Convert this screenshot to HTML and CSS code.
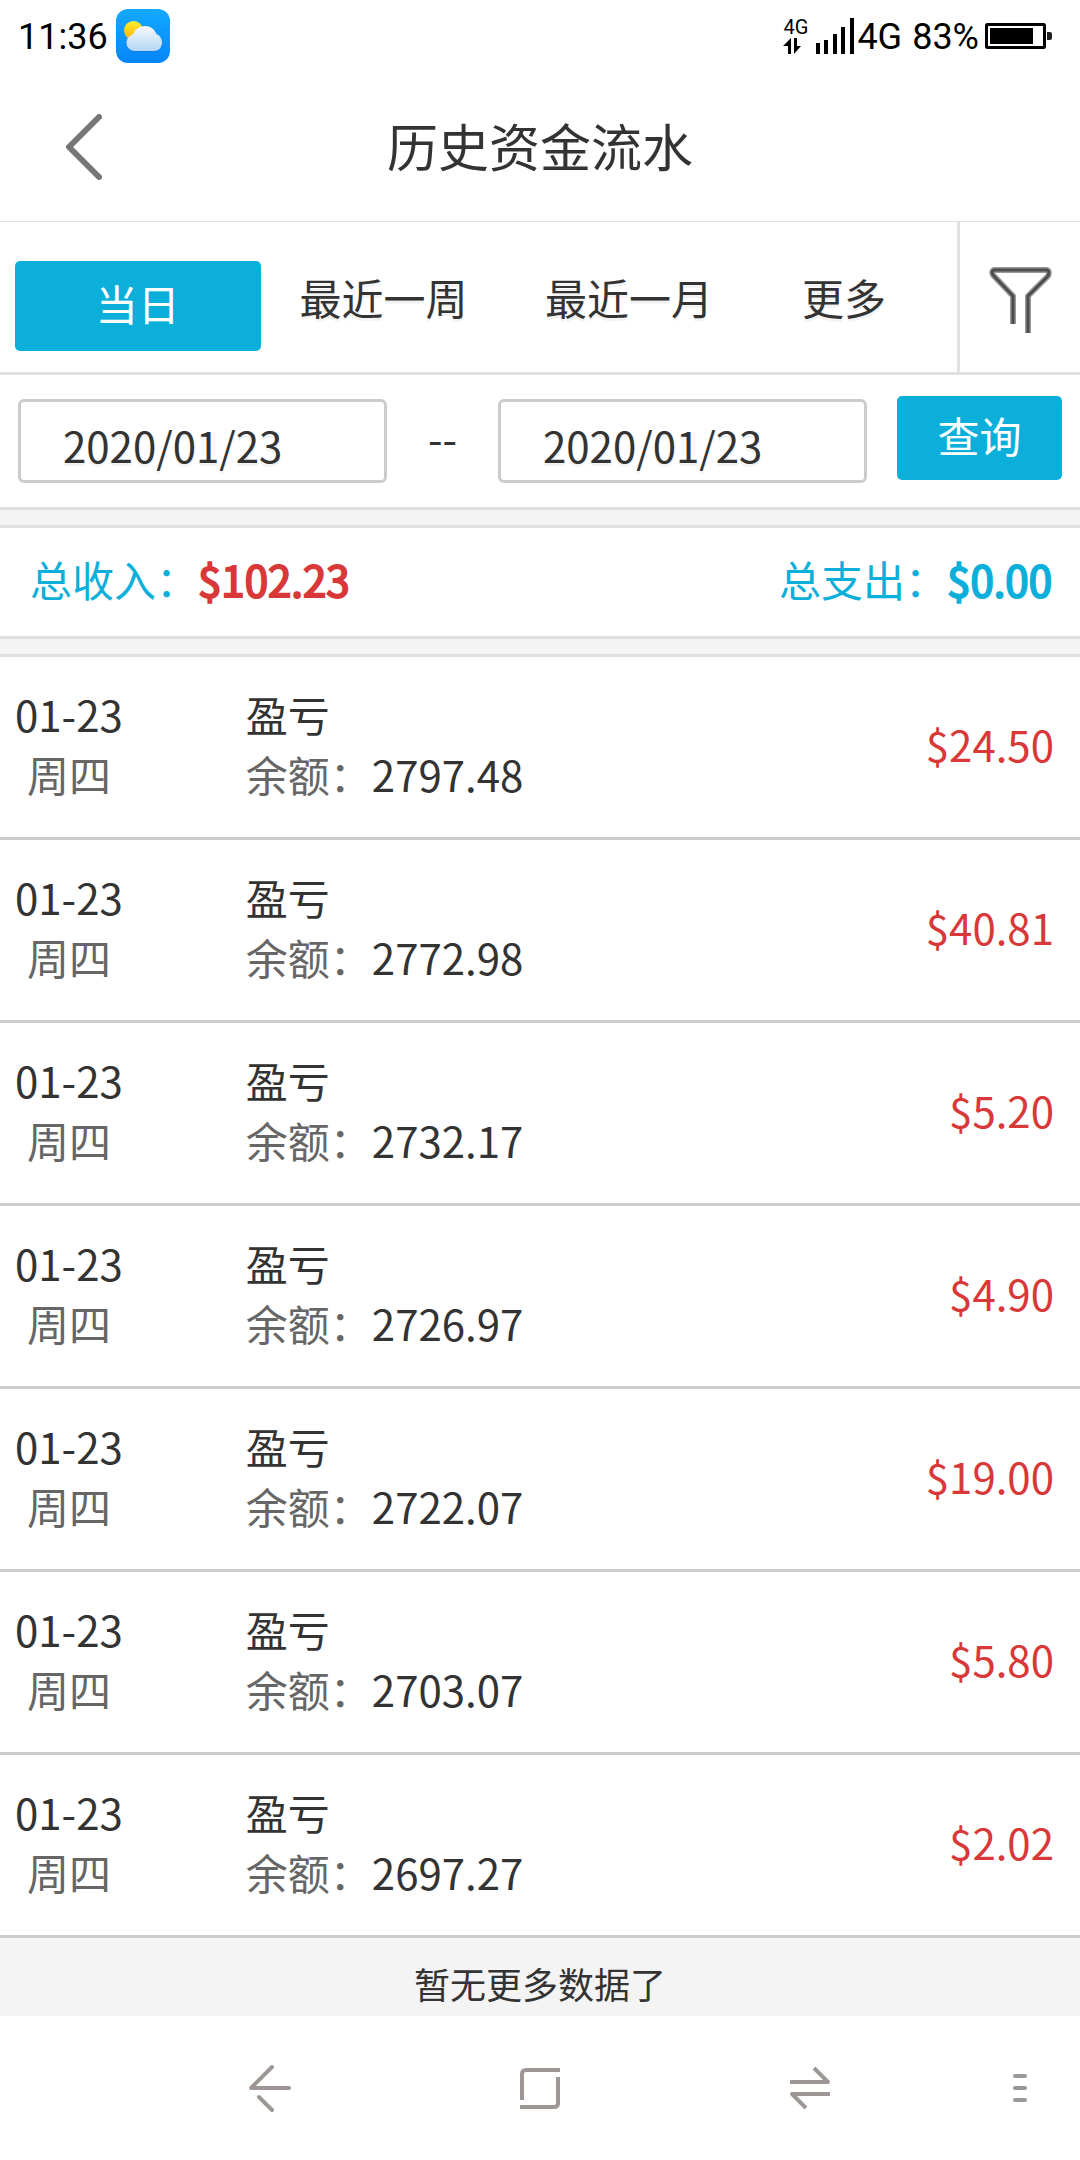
FILE: index.html
```html
<!DOCTYPE html>
<html lang="zh-CN">
<head>
<meta charset="utf-8">
<meta name="viewport" content="width=device-width">
<title>历史资金流水</title>
<link rel="stylesheet" href="styles.css">
</head>
<body>
<div class="status">
  <span class="status-text">11:36</span>
  <svg class="weather" viewBox="0 0 54 54" width="54" height="54" aria-hidden="true">
    <defs>
      <linearGradient id="sky" x1="0" y1="0" x2="0" y2="1"><stop offset="0" stop-color="#14a9ff"/><stop offset="1" stop-color="#0586fa"/></linearGradient>
      <linearGradient id="sun" x1="0" y1="0" x2="0" y2="1"><stop offset="0" stop-color="#fff032"/><stop offset="1" stop-color="#ffae00"/></linearGradient>
      <linearGradient id="cloud" x1="0" y1="0" x2="0" y2="1"><stop offset="0" stop-color="#f6fafe"/><stop offset="1" stop-color="#b5d6f5"/></linearGradient>
    </defs>
    <rect width="54" height="54" rx="12" fill="url(#sky)"/>
    <circle cx="17.500" cy="21.500" r="9.500" fill="url(#sun)"/>
    <path d="M18 43.500a8 8 0 0 1-7.500-8c0-4 2.500-7.500 6.500-8.500 1.500-6 6.500-10 12.500-10 5.500 0 9.500 3 11.500 8.500 3 1.500 5 4.500 5 8.500 0 5-3.500 9.500-8 9.500z" fill="#086fd8" opacity=".35"/>
    <path d="M18 42a8 8 0 0 1-7.500-8c0-4 2.500-7.500 6.500-8.500 1.500-5 6.500-8.500 12-8.500s9.500 3 11.500 8c3.500 1.500 5.500 5 5.500 8.500 0 5-3.500 8.500-8 8.500z" fill="url(#cloud)"/>
  </svg>
  <div class="status-right">
    <div class="data">
      <span class="data-text">4G</span>
      <svg viewBox="0 0 18 18" width="18" height="18" aria-hidden="true"><path d="M8 1v16H5V9H0zM11 1v16l7-8h-4V1z"/></svg>
    </div>
    <svg class="signal" viewBox="0 0 40 36" width="40" height="36" aria-hidden="true"><path d="M1 25h4v11H1zM9 22h4v14H9zM18 16h4v20h-4zM26 9h4v27h-4zM35 0h4v36h-4z"/></svg>
    <span class="status-text">4G</span>
    <span class="status-text percent">83%</span>
    <svg viewBox="0 0 67 28" width="67" height="28" aria-hidden="true"><rect x="1.500" y="2.500" width="58" height="23" rx="1" fill="none" stroke="#000" stroke-width="3"/><path d="M5 6h43v16H5z"/><path d="M62 10h3q2 0 2 2v4q0 2-2 2h-3z" fill="#222"/></svg>
  </div>
</div>

<header class="header">
  <button class="back" type="button" aria-label="返回"><svg viewBox="0 0 36 66" width="36" height="66"><path d="M33 3 3 33l30 30" fill="none" stroke="#767675" stroke-width="6" stroke-linecap="round" stroke-linejoin="round"/></svg></button>
  <h1 class="title">历史资金流水</h1>
</header>

<main class="main">
  <div class="filters">
    <nav class="tabs">
      <a class="tab tab-active" href="#today">当日</a>
      <a class="tab" href="#week">最近一周</a>
      <a class="tab" href="#month">最近一月</a>
      <a class="tab" href="#more">更多</a>
    </nav>
    <button class="filter" type="button" aria-label="筛选">
      <svg viewBox="0 0 64 66" width="64" height="66" fill="none" stroke-linejoin="round">
        <path d="M24 57V29L4 8q-2-4 1-5h53q3 1 1 6L39 29v37" stroke="#999" stroke-width="6"/>
        <path d="M24 57V29L4 8q-2-4 1-5h53q3 1 1 6L39 29v37" stroke="#4d4d4d" stroke-width="3"/>
      </svg>
    </button>
  </div>

  <form class="range">
    <input class="date" type="text" value="2020/01/23" aria-label="开始日期">
    <span class="to">--</span>
    <input class="date" type="text" value="2020/01/23" aria-label="结束日期">
    <button class="query" type="button">查询</button>
  </form>

  <div class="summary">
    <div>总收入：<strong class="total income">$102.23</strong></div>
    <div>总支出：<strong class="total">$0.00</strong></div>
  </div>

  <ul class="list">
    <li class="row"><div class="day"><span>01-23</span><span class="muted">周四</span></div><div class="info"><span>盈亏</span><span><span class="muted">余额：</span>2797.48</span></div><span class="amount">$24.50</span></li>
    <li class="row"><div class="day"><span>01-23</span><span class="muted">周四</span></div><div class="info"><span>盈亏</span><span><span class="muted">余额：</span>2772.98</span></div><span class="amount">$40.81</span></li>
    <li class="row"><div class="day"><span>01-23</span><span class="muted">周四</span></div><div class="info"><span>盈亏</span><span><span class="muted">余额：</span>2732.17</span></div><span class="amount">$5.20</span></li>
    <li class="row"><div class="day"><span>01-23</span><span class="muted">周四</span></div><div class="info"><span>盈亏</span><span><span class="muted">余额：</span>2726.97</span></div><span class="amount">$4.90</span></li>
    <li class="row"><div class="day"><span>01-23</span><span class="muted">周四</span></div><div class="info"><span>盈亏</span><span><span class="muted">余额：</span>2722.07</span></div><span class="amount">$19.00</span></li>
    <li class="row"><div class="day"><span>01-23</span><span class="muted">周四</span></div><div class="info"><span>盈亏</span><span><span class="muted">余额：</span>2703.07</span></div><span class="amount">$5.80</span></li>
    <li class="row"><div class="day"><span>01-23</span><span class="muted">周四</span></div><div class="info"><span>盈亏</span><span><span class="muted">余额：</span>2697.27</span></div><span class="amount">$2.02</span></li>
  </ul>
  <p class="end">暂无更多数据了</p>
</main>

<nav class="system">
  <button class="key key-back" type="button" aria-label="后退"><svg viewBox="0 0 48 48" width="48" height="48"><path d="M43 24H5L26 3M13 33l13 13" stroke-linecap="round" stroke-linejoin="round"/></svg></button>
  <button class="key" type="button" aria-label="主页"><svg viewBox="0 0 48 48" width="48" height="48"><path d="M44 6H10q-4 0-4 4v26M42 13v26q0 4-4 4H4"/></svg></button>
  <button class="key" type="button" aria-label="切换"><svg viewBox="0 0 48 48" width="48" height="48"><path d="M4 18h38L28 4M44 30H6l14 14" stroke-linejoin="round"/></svg></button>
  <button class="key key-menu" type="button" aria-label="菜单"><svg viewBox="0 0 48 48" width="48" height="48"><path d="M19 12h10M19 24h10M19 36h10" stroke-linecap="round"/></svg></button>
</nav>
</body>
</html>
```
FILE: styles.css
```css
* {
  box-sizing: border-box;
}

body {
  margin: 0;
  min-height: 100vh;
  display: flex;
  flex-direction: column;
  background: #fff;
  color: #333;
  font: 42px/60px "Noto Sans CJK SC", sans-serif;
}

button {
  margin: 0;
  padding: 0;
  border: 0;
  background: none;
  font: inherit;
  color: inherit;
}

svg {
  display: block;
}

/* Phone status bar */
.status {
  display: flex;
  align-items: center;
  height: 72px;
  padding: 0 28px 0 18px;
  color: #000;
  font-family: Roboto, sans-serif;
}

.status-text {
  padding-top: 2px;
  font-size: 36px;
  line-height: 44px;
}

.weather {
  margin-left: 8px;
}

.status-right {
  display: flex;
  align-items: center;
  margin-left: auto;
}

.data {
  display: flex;
  flex-direction: column;
  width: 32px;
}

.data-text {
  font-size: 20px;
  line-height: 20px;
}

.signal {
  margin-right: 2px;
}

.percent {
  margin: 0 6px 0 10px;
}

/* Title bar */
.header {
  display: grid;
  grid-template-columns: 168px 1fr 168px;
  align-items: center;
  height: 150px;
  border-bottom: 1px solid #e0e0e0;
}

.back {
  display: flex;
  justify-content: center;
}

.title {
  margin: 0;
  padding-bottom: 3px;
  font-size: 51px;
  font-weight: 400;
  line-height: 72px;
  text-align: center;
}

/* Period tabs */
.main {
  background: #f4f4f4;
}

.filters,
.range,
.summary {
  display: flex;
  background: #fff;
  border-bottom: 3px solid #e0e0e0;
}

.filters {
  height: 153px;
}

.tabs {
  flex: 1;
  display: grid;
  grid-template-columns: repeat(3, 4fr) 3fr;
  align-items: center;
  padding: 0 21px 0 15px;
}

.tab {
  color: #333;
  text-align: center;
  text-decoration: none;
  text-shadow: 0 3px 0 #f3f3f3;
}

.tab-active {
  margin-top: 18px;
  padding: 12px 0 18px;
  border-radius: 5px;
  background: #0cafda;
  color: #fff;
  text-shadow: none;
}

.filter {
  width: 123px;
  padding: 6px 0 0 2px;
  border-left: 3px solid #e0e0e0;
  display: flex;
  align-items: center;
  justify-content: center;
}

/* Date range */
.range {
  align-items: center;
  height: 135px;
  padding: 0 18px;
}

.date {
  flex: 1;
  min-width: 0;
  height: 84px;
  padding: 6px 12px 0 42px;
  border: 3px solid #ccc;
  border-radius: 6px;
  background: #fff;
  color: inherit;
  font: inherit;
  text-shadow: 0 3px 0 #f3f3f3;
}

.to {
  width: 111px;
  padding-bottom: 8px;
  text-align: center;
}

.query {
  width: 165px;
  height: 84px;
  margin: 0 0 6px 30px;
  padding-bottom: 6px;
  border-radius: 5px;
  background: #0cafda;
  color: #fff;
}

/* Totals */
.summary {
  justify-content: space-between;
  margin: 15px 0;
  padding: 21px 28px 27px 30px;
  border-top: 3px solid #e0e0e0;
  color: #0cafda;
}

/* Thickened regular digits keep the same advance as the list amounts */
.total {
  font-weight: 400;
  -webkit-text-stroke: 2px currentColor;
}

.income,
.amount {
  color: #d93838;
}

/* Transactions */
.list {
  margin: 0;
  padding: 0;
  list-style: none;
  border-top: 3px solid #e0e0e0;
}

.row {
  display: flex;
  align-items: center;
  padding: 27px 26px 33px 15px;
  border-bottom: 3px solid #ccc;
  background: #fff;
}

.day,
.info {
  display: flex;
  flex-direction: column;
}

.day {
  align-items: center;
  margin-right: 123px;
}

.muted {
  color: #666;
}

.amount {
  margin-left: auto;
}

.end {
  margin: 0;
  padding-top: 12px;
  font-size: 36px;
  line-height: 66px;
  text-align: center;
}

/* System keys */
.system {
  flex: 1;
  display: grid;
  grid-template-columns: 1fr 2fr 2fr 2fr 1fr;
  align-items: center;
  min-height: 144px;
}

.key {
  display: flex;
  justify-content: center;
  fill: none;
  stroke: #9f9795;
  stroke-width: 4px;
}

.key-back {
  grid-column: 2;
}

.key-menu {
  width: 120px;
  justify-self: end;
  stroke: #999;
}
```
